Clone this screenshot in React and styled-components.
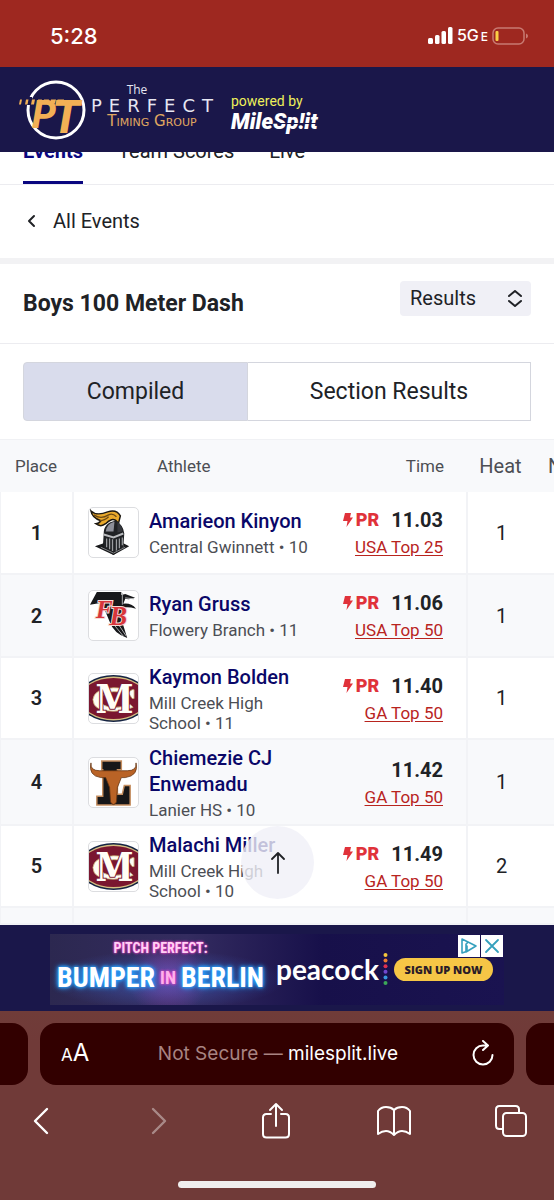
import React from "react";
import styled, { createGlobalStyle, css } from "styled-components";

const GlobalStyle = createGlobalStyle`
  * { box-sizing: border-box; }
  body { margin: 0; background: #fff; color: #202226; font-family: Roboto, "Liberation Sans", sans-serif; }
  button, select { font: inherit; color: inherit; margin: 0; }
`;

const Page = styled.div`
  min-height: 100vh;
  display: flex;
  flex-direction: column;
  overflow: hidden;
`;

const StatusBar = styled.div`
  height: 67px;
  padding: 4px 26px 0 50px;
  display: flex;
  align-items: center;
  justify-content: space-between;
  background: #9e2820;
  color: #fff;
  font-family: Inter, "Liberation Sans", sans-serif;
`;
const Clock = styled.time`
  font-size: 22px;
  line-height: 28px;
  font-weight: 500;
`;
const StatusIcons = styled.div`
  display: flex;
  align-items: center;
  gap: 4px;
  font-size: 16px;
  line-height: 20px;
  font-weight: 500;
`;
const Network = styled.span`
  small { font-size: 12px; margin-left: 2px; }
`;

const Header = styled.header`
  position: relative;
  z-index: 2;
  height: 85px;
  padding: 0 18px;
  display: flex;
  align-items: center;
  background: #1a174a;
  color: #fff;
`;
const BrandText = styled.div`
  width: 128px;
  margin: 0 0 8px 2px;
  display: flex;
  flex-direction: column;
  align-items: center;
  font-family: "DejaVu Sans", sans-serif;
  color: #e6e6f2;
`;
const BrandThe = styled.span`
  margin-right: 30px;
  font: 12px/14px "Open Sans", sans-serif;
`;
const BrandName = styled.span`
  font-size: 18px;
  line-height: 17px;
  letter-spacing: 7px;
  margin-right: -7px;
`;
const BrandSub = styled.span`
  font-size: 15px;
  line-height: 14px;
  font-variant: small-caps;
  white-space: nowrap;
  color: #e0a860;
`;
const Powered = styled.div`
  margin-left: 15px;
  padding-top: 7px;
`;
const PoweredBy = styled.div`
  font-size: 14px;
  line-height: 17px;
  color: #eef05a;
`;
const MileSplit = styled.div`
  position: relative;
  font: italic 900 22px/24px Roboto, sans-serif;
  &::after {
    content: "";
    position: absolute;
    right: 0;
    top: 13px;
    width: 40px;
    height: 1px;
    background: #1a174a;
  }
`;

const Main = styled.main`
  position: relative;
  flex: 1;
  overflow: hidden;
  background: #fff;
`;
const Tabs = styled.nav`
  margin-top: -13px;
  padding: 0 23px;
  display: flex;
  gap: 35px;
  border-bottom: 1px solid #ececf0;
`;
const Tab = styled.a`
  padding-bottom: 18px;
  font-size: 20px;
  line-height: 24px;
  text-decoration: none;
  color: #202226;
  border-bottom: 3px solid transparent;
  ${(p) => p.$active && css`
    font-weight: 700;
    color: #0a0780;
    border-color: #0a0780;
  `}
`;
const BackLink = styled.a`
  height: 79px;
  padding: 0 26px 2px;
  display: flex;
  align-items: center;
  gap: 16px;
  border-bottom: 6px solid #f2f2f4;
  font-size: 20px;
  line-height: 24px;
  color: inherit;
  text-decoration: none;
`;
const TitleBar = styled.div`
  height: 80px;
  padding: 0 23px;
  display: flex;
  align-items: center;
  justify-content: space-between;
  border-bottom: 1px solid #ececf0;
`;
const Title = styled.h1`
  margin: 0;
  font-size: 23px;
  line-height: 28px;
  font-weight: 700;
`;
const SelectBox = styled.label`
  position: relative;
  margin-bottom: 10px;
  svg { position: absolute; right: 9px; top: 9px; pointer-events: none; }
`;
const Select = styled.select`
  appearance: none;
  display: block;
  width: 131px;
  height: 35px;
  padding: 0 10px 2px;
  border: 0;
  border-radius: 4px;
  background: #f0f0f6;
  font-size: 20px;
  line-height: 24px;
`;
const Segments = styled.div`
  margin: 18px 23px;
  display: grid;
  grid-template-columns: 225fr 283fr;
`;
const Segment = styled.button`
  height: 59px;
  border: 1px solid #d4d6de;
  border-left-width: ${(p) => (p.$active ? "1px" : "0")};
  border-radius: ${(p) => (p.$active ? "4px 0 0 4px" : "0")};
  background: ${(p) => (p.$active ? "#d9dcec" : "#fff")};
  font-size: 23px;
  line-height: 28px;
`;

const Table = styled.table`
  width: calc(100% + 45px);
  table-layout: fixed;
  border-collapse: separate;
  border-spacing: 0;
`;
const HeadCell = styled.th`
  height: 53px;
  padding: 0 ${(p) => p.$right || 0}px 0 ${(p) => p.$left || 0}px;
  background: #f8f9fb;
  border-top: 1px solid #f0f1f4;
  font-weight: 400;
  font-size: ${(p) => (p.$large ? 20 : 17)}px;
  line-height: 24px;
  text-align: ${(p) => p.$align || "center"};
  color: #4c4e54;
`;
const Row = styled.tr`
  height: ${(p) => p.$height}px;
  background: ${(p) => (p.$shaded ? "#f8f9fb" : "#fff")};
`;
const Cell = styled.td`
  padding: 0;
  border-left: ${(p) => (p.$bold ? 1 : 2)}px solid #f2f3f6;
  border-bottom: 2px solid #f2f3f6;
  font-size: 20px;
  text-align: center;
  font-weight: ${(p) => (p.$bold ? 600 : 400)};
`;
const OpenCell = styled(Cell)`
  border-left: 0;
`;
const Athlete = styled.div`
  padding: 4px 0 4px 14px;
  display: flex;
  align-items: center;
  gap: 10px;
  text-align: left;
`;
const Crest = styled.div`
  flex: none;
  width: 51px;
  height: 51px;
  border: 1px solid #dcdde0;
  border-radius: 5px;
  overflow: hidden;
  background: #fff;
  svg { display: block; width: 100%; height: 100%; }
`;
const AthleteText = styled.div`
  width: 162px;
`;
const Name = styled.a`
  display: block;
  font-size: 20px;
  line-height: 26px;
  font-weight: 500;
  color: #0a0768;
  text-decoration: none;
`;
const School = styled.div`
  margin-top: 3px;
  font-size: 17px;
  line-height: 20px;
  color: #4c4e54;
`;
const Result = styled.div`
  padding: 2px 23px 0 0;
  text-align: right;
  line-height: 26px;
`;
const Mark = styled.div`
  display: flex;
  align-items: center;
  justify-content: flex-end;
  gap: 12px;
  font-weight: 700;
`;
const Badge = styled.span`
  display: flex;
  align-items: center;
  gap: 3px;
  font-size: 18px;
  font-weight: 900;
  color: #e0323a;
`;
const RankLink = styled.a`
  font-size: 17px;
  color: #b8241e;
  text-decoration: underline;
  text-underline-offset: 2px;
`;
const ToTop = styled.button`
  position: absolute;
  left: 50%;
  bottom: 26px;
  width: 73px;
  height: 73px;
  margin-left: -36px;
  padding: 0;
  border: 0;
  border-radius: 50%;
  background: rgba(240, 240, 248, 0.8);
  display: grid;
  place-items: center;
`;

const AdStrip = styled.aside`
  height: 86px;
  padding-top: 2px;
  display: flex;
  align-items: center;
  justify-content: center;
  background: #1a174a;
`;
const Ad = styled.div`
  position: relative;
  width: 454px;
  height: 71px;
  padding: 0 11px 0 7px;
  display: flex;
  align-items: center;
  background:
    radial-gradient(ellipse 120px 30px at 115px 46px, rgba(70, 110, 220, 0.55), transparent),
    radial-gradient(circle at 118px 44px, rgba(190, 60, 180, 0.5), transparent 40px),
    linear-gradient(90deg, #2c2850, #342c60 30%, #17104a 60%, #1a1350);
  color: #fff;
`;
const Show = styled.div`
  flex: none;
  width: 207px;
  display: flex;
  flex-direction: column;
  align-items: center;
  font-family: "Liberation Sans Narrow", "Roboto Condensed", Roboto, sans-serif;
  font-weight: 700;
  white-space: nowrap;
`;
const ShowTop = styled.div`
  font-size: 14px;
  line-height: 18px;
  color: #ffd0f4;
  text-shadow: 0 0 3px #f040c8, 0 0 2px #f040c8;
`;
const ShowTitle = styled.div`
  display: flex;
  align-items: center;
  gap: 5px;
  font-size: 28px;
  line-height: 42px;
  text-shadow: 0 0 4px #28a0ff, 0 0 3px #28a0ff, 0 0 6px #28a0ff;
  small {
    font-size: 18px;
    color: #ffb0ec;
    text-shadow: 0 0 3px #f040c8, 0 0 3px #f040c8;
  }
`;
const Peacock = styled.div`
  flex: 1;
  padding-left: 12px;
  display: flex;
  align-items: center;
  gap: 4px;
  font: 700 28px/36px Lato, sans-serif;
`;
const SignUp = styled.button`
  flex: none;
  width: 99px;
  height: 23px;
  padding: 0;
  border: 0;
  border-radius: 12px;
  background: #f6c646;
  font: 800 11px/23px "Open Sans", sans-serif;
  color: #2a1c28;
`;
const AdChoices = styled.div`
  position: absolute;
  top: 1px;
  right: 1px;
  display: flex;
  gap: 1px;
`;
const AdButton = styled.button`
  width: 22px;
  height: 22px;
  padding: 0;
  border: 0;
  background: #fff;
  display: grid;
  place-items: center;
`;

const Safari = styled.footer`
  height: 189px;
  padding-top: 12px;
  display: flex;
  flex-direction: column;
  background: linear-gradient(#703c39, #703a38 30px);
  color: #fff;
  font-family: Inter, "Liberation Sans", sans-serif;
`;
const TabStrip = styled.div`
  display: grid;
  grid-template-columns: 28px 1fr 28px;
  gap: 12px;
`;
const SideTab = styled.div`
  background: #320000;
  border-radius: ${(p) => (p.$right ? "16px 0 0 16px" : "0 16px 16px 0")};
`;
const AddressBar = styled.div`
  height: 62px;
  padding: 0 19px 0 21px;
  display: grid;
  grid-template-columns: 32px 1fr 32px;
  align-items: center;
  border-radius: 16px;
  background: #320000;
`;
const BarButton = styled.button`
  padding: 0;
  border: 0;
  background: none;
  display: flex;
  align-items: baseline;
  justify-content: ${(p) => (p.$end ? "flex-end" : "flex-start")};
  font-size: ${(p) => p.$size || 16}px;
  line-height: 28px;
  small { font-size: 17px; }
`;
const Address = styled.div`
  font-size: 19px;
  line-height: 24px;
  text-align: center;
  white-space: nowrap;
  span { color: #a88482; }
`;
const Toolbar = styled.nav`
  padding: 15px 20px 0 18px;
  display: flex;
  align-items: center;
  justify-content: space-between;
`;
const ToolButton = styled(BarButton)`
  width: 46px;
  height: 42px;
  align-items: center;
  justify-content: center;
  opacity: ${(p) => (p.$dim ? 0.4 : 1)};
`;
const HomeBar = styled.div`
  width: 198px;
  height: 7px;
  margin: auto auto 12px;
  border-radius: 4px;
  background: #f0eeee;
`;

const Line = ({ w, h, d, sw = 2, box, children, color = "currentColor" }) => (
  <svg width={w} height={h} viewBox={box || `0 0 ${w} ${h}`} fill="none" stroke={color} strokeWidth={sw} strokeLinecap="round" strokeLinejoin="round" aria-hidden="true">
    {d && <path d={d} />}
    {children}
  </svg>
);

const Signal = () => (
  <svg width="25" height="17" viewBox="0 0 25 17" fill="#fff" aria-hidden="true">
    <rect x="0" y="11" width="5" height="6" rx="1.5" />
    <rect x="7" y="8" width="4.5" height="9" rx="1.5" />
    <rect x="13.5" y="4" width="4.5" height="13" rx="1.5" />
    <rect x="20" y="0" width="4.5" height="17" rx="1.5" />
  </svg>
);

const Battery = () => (
  <svg width="36" height="18" viewBox="0 0 36 18" aria-hidden="true">
    <rect x="1" y="1" width="31" height="16" rx="5" fill="none" stroke="#c87a72" strokeWidth="1.5" />
    <path d="M34 6.5q2 .7 2 2.5t-2 2.5z" fill="#c87a72" />
    <rect x="3.5" y="4" width="3" height="10" rx="1" fill="#fbcf45" />
  </svg>
);

const PTLogo = () => (
  <svg width="68" height="62" viewBox="0 0 68 62" role="img" aria-label="PT">
    <circle cx="38" cy="31" r="28" fill="none" stroke="#fff" strokeWidth="3" />
    <path d="M0 18h14v8H0z" fill="#1a174a" />
    <g fill="#f2b055" fontFamily="Roboto, sans-serif" fontWeight="800" fontStyle="italic">
      <text x="14" y="49" fontSize="38">P</text>
      <text x="34" y="54" fontSize="46">T</text>
      <path d="M2 20.500h2l-1 5H1zM8 20.500h2.500l-1 5H7zM14 20.500h3l-1 5h-3zM20 20.500h4l-1 5h-4zM26 20.500h5l-1 4h-5zM33 20.500h5l-1 4h-5zM39.500 20.500H46v4h-7z" />
    </g>
  </svg>
);

const Knight = () => (
  <svg viewBox="0 0 50 50" role="img" aria-label="Central Gwinnett">
    <path d="M2 3q3 3 8 3 4 0 9-2 9-3 13 4l-2 8q-3-5-7-4-3 1-6 4-5 4-10 0 3 0 5-3Q3 10 2 3z" fill="#e9a92c" stroke="#1c1812" strokeWidth="1.500" />
    <path d="M5 7q7 5 15 0 4-2 8 2M11 13q5 0 9-4" fill="none" stroke="#6d4914" strokeWidth="1.300" />
    <path d="M15 26q0-11 12-13 8 4 9 13l-1 14-10 8-11-7z" fill="#202225" />
    <path d="M17 24q1-8 9-10l-1 10z" fill="#8d8f99" />
    <path d="M29 14q5 4 5 10l-5 1z" fill="#34363b" />
    <path d="M15 27l10 3 10-4" fill="none" stroke="#b8babd" strokeWidth="2" />
    <path d="M18 31v9M21 31v11M24 32v12M28 32v12M31 31v10M34 30v8" stroke="#9b9da0" strokeWidth="1.300" />
    <path d="M6 39l9-3v4l10 5 10-5v-4l6 3-16 9z" fill="#18191b" />
    <path d="M12 40l13 6 12-6" fill="none" stroke="#85878a" />
  </svg>
);

const Falcon = () => (
  <svg viewBox="0 0 50 50" role="img" aria-label="Flowery Branch">
    <path d="M8 1h25v3l4-1 10 4q-5 2-10 1l-2 5q8-1 13 5-8-2-13-1l-1 15 5 16q-14-5-18-17L13 12 1 14z" fill="#17181a" />
    <path d="M34 2v12M37 7l9 1M26 35l9 11M30 34l8 12" stroke="#b0b2b4" strokeWidth="1" fill="none" />
    <g fontFamily="Liberation Serif, serif" fontStyle="italic" fontWeight="700" fill="#d8363b" stroke="#f3dcd8" strokeWidth="2" paintOrder="stroke">
      <text x="7" y="28" fontSize="26">F</text>
      <text x="21" y="35" fontSize="27">B</text>
    </g>
  </svg>
);

const MillCreek = () => (
  <svg viewBox="0 0 50 50" role="img" aria-label="Mill Creek">
    <ellipse cx="25" cy="25" rx="35" ry="24" fill="#152443" />
    <ellipse cx="25" cy="25" rx="34" ry="22.500" fill="#d5bf82" />
    <ellipse cx="25" cy="25" rx="33" ry="21" fill="#7a1730" />
    <path d="M46 16v9h-2q-2-5-8-6-6-1-11-1-12 1-13 8 1 8 13 8 10 0 17-3l3 3q-8 4-20 4Q4 38 4 26q1-11 21-12 11 0 16 4l3-2z" fill="#fffdf5" stroke="#c8ad70" strokeWidth="0.800" />
    <text x="26" y="40" fontSize="39" fontFamily="DejaVu Serif Condensed, Liberation Serif, serif" fontWeight="700" fill="#fffdf5" stroke="#7a1730" strokeWidth="2" paintOrder="stroke" textAnchor="middle">M</text>
  </svg>
);

const Longhorn = () => (
  <svg viewBox="0 0 50 50" role="img" aria-label="Lanier">
    <path d="M13 3h20v9h-4v25h5l2-9h6v20H8v-9h6V12h-1z" fill="#171719" stroke="#c68f60" strokeWidth="1.500" />
    <path d="M2 5q-1 8 9 8 14 0 15 0 8 0 13 0 10 0 9-8 3 13-11 15h-4l-4 10-1 15q-3 5-6 0l-1-15-4-10h-5Q-1 18 2 5z" fill="#b96326" stroke="#653412" strokeWidth="0.800" />
  </svg>
);

const crests = { knight: Knight, falcon: Falcon, creek: MillCreek, longhorn: Longhorn };

const athletes = [
  { place: 1, crest: "knight", name: "Amarieon Kinyon", school: "Central Gwinnett • 10", pr: true, time: "11.03", rank: "USA Top 25", heat: 1, height: 83 },
  { place: 2, crest: "falcon", name: "Ryan Gruss", school: "Flowery Branch • 11", pr: true, time: "11.06", rank: "USA Top 50", heat: 1, height: 83 },
  { place: 3, crest: "creek", name: "Kaymon Bolden", school: "Mill Creek High School • 11", pr: true, time: "11.40", rank: "GA Top 50", heat: 1, height: 82 },
  { place: 4, crest: "longhorn", name: "Chiemezie CJ Enwemadu", school: "Lanier HS • 10", time: "11.42", rank: "GA Top 50", heat: 1, height: 86 },
  { place: 5, crest: "creek", name: "Malachi Miller", school: "Mill Creek High School • 10", pr: true, time: "11.49", rank: "GA Top 50", heat: 2, height: 82 },
];

function AthleteRow({ a, shaded }) {
  const Logo = crests[a.crest];
  return (
    <Row $height={a.height} $shaded={shaded}>
      <Cell $bold>{a.place}</Cell>
      <Cell>
        <Athlete>
          <Crest><Logo /></Crest>
          <AthleteText>
            <Name href="#athlete">{a.name}</Name>
            <School>{a.school}</School>
          </AthleteText>
        </Athlete>
      </Cell>
      <OpenCell>
        <Result>
          <Mark>
            {a.pr && (
              <Badge>
                <svg width="10" height="14" viewBox="0 0 10 14" fill="currentColor" aria-hidden="true">
                  <path d="M2 0h6L7 4.500h3L3.500 14l1-6H0z" />
                </svg>
                PR
              </Badge>
            )}
            <span>{a.time}</span>
          </Mark>
          <RankLink href="#rankings">{a.rank}</RankLink>
        </Result>
      </OpenCell>
      <Cell>{a.heat}</Cell>
      <OpenCell />
    </Row>
  );
}

export default function App() {
  return (
    <Page>
      <GlobalStyle />
      <StatusBar>
        <Clock>5:28</Clock>
        <StatusIcons>
          <Signal />
          <Network>5G<small>E</small></Network>
          <Battery />
        </StatusIcons>
      </StatusBar>
      <Header>
        <PTLogo />
        <BrandText>
          <BrandThe>The</BrandThe>
          <BrandName>PERFECT</BrandName>
          <BrandSub>Timing Group</BrandSub>
        </BrandText>
        <Powered>
          <PoweredBy>powered by</PoweredBy>
          <MileSplit>MileSp!it</MileSplit>
        </Powered>
      </Header>
      <Main>
        <Tabs>
          <Tab href="#events" $active>Events</Tab>
          <Tab href="#scores">Team Scores</Tab>
          <Tab href="#live">Live</Tab>
        </Tabs>
        <BackLink href="#all">
          <Line w={11} h={14} d="M8 2L3 7l5 5" />
          All Events
        </BackLink>
        <TitleBar>
          <Title>Boys 100 Meter Dash</Title>
          <SelectBox>
            <Select aria-label="View" defaultValue="Results">
              <option>Results</option>
            </Select>
            <Line w={14} h={17} d="M1 6l6-5 6 5M1 11l6 5 6-5" />
          </SelectBox>
        </TitleBar>
        <Segments>
          <Segment $active>Compiled</Segment>
          <Segment>Section Results</Segment>
        </Segments>
        <Table>
          <colgroup>
            <col style={{ width: 72 }} />
            <col />
            <col style={{ width: 140 }} />
            <col style={{ width: 69 }} />
            <col style={{ width: 64 }} />
          </colgroup>
          <thead>
            <tr>
              <HeadCell>Place</HeadCell>
              <HeadCell $align="left" $left={85}>Athlete</HeadCell>
              <HeadCell $align="right" $right={22}>Time</HeadCell>
              <HeadCell $large>Heat</HeadCell>
              <HeadCell $large $align="left" $left={13}>N</HeadCell>
            </tr>
          </thead>
          <tbody>
            {athletes.map((a, i) => <AthleteRow key={a.place} a={a} shaded={i % 2 === 1} />)}
            <Row $height={17} $shaded>
              <Cell $bold /><Cell /><OpenCell /><Cell /><OpenCell />
            </Row>
          </tbody>
        </Table>
        <ToTop aria-label="Back to top">
          <Line w={14} h={22} d="M7 21V1M1 7l6-6 6 6" sw={1.8} />
        </ToTop>
      </Main>
      <AdStrip>
        <Ad>
          <Show>
            <ShowTop>PITCH PERFECT:</ShowTop>
            <ShowTitle>BUMPER <small>IN</small> BERLIN</ShowTitle>
          </Show>
          <Peacock>
            peacock
            <svg width="5" height="34" viewBox="0 0 5 34" aria-hidden="true">
              {["#f4c63c", "#ec7a30", "#dc3050", "#7048d0", "#3898e0", "#3ca858"].map((c, i) => (
                <circle key={c} cx="2.500" cy={3 + i * 5.6} r="2" fill={c} />
              ))}
            </svg>
          </Peacock>
          <SignUp>SIGN UP NOW</SignUp>
          <AdChoices>
            <AdButton aria-label="Ad information">
              <Line w={18} h={18} d="M2 2v14l3-1M2 2l14 7-10 6V7M7 9v5M7 6v.5" color="#35a0bd" sw={1.6} />
            </AdButton>
            <AdButton aria-label="Close ad">
              <Line w={18} h={18} d="M3 3l12 12M15 3L3 15" color="#35a0bd" sw={1.8} />
            </AdButton>
          </AdChoices>
        </Ad>
      </AdStrip>
      <Safari>
        <TabStrip>
          <SideTab />
          <AddressBar>
            <BarButton aria-label="Page settings" $size={24}><small>A</small>A</BarButton>
            <Address><span>Not Secure — </span>milesplit.live</Address>
            <BarButton aria-label="Reload" $end>
              <Line w={24} h={28} d="M12 5.500A9.500 9.500 0 1 0 21.500 15M12 5.500h4M12 1l5 4.500-5 4.500" />
            </BarButton>
          </AddressBar>
          <SideTab $right />
        </TabStrip>
        <Toolbar>
          <ToolButton aria-label="Back"><Line w={18} h={30} d="M15 3L3 15l12 12" sw={2.4} /></ToolButton>
          <ToolButton $dim aria-label="Forward"><Line w={18} h={30} d="M3 3l12 12L3 27" sw={2.4} /></ToolButton>
          <ToolButton aria-label="Share">
            <Line w={30} h={38} d="M10 12H5.500Q2 12 2 15.500V32q0 3.500 3.500 3.500h19Q28 35.500 28 32V15.500Q28 12 24.500 12H20M15 24V2M9 8l6-6 6 6" />
          </ToolButton>
          <ToolButton aria-label="Bookmarks">
            <Line w={36} h={32} d="M18 30V5Q15 2 10 2T2 6v23q4-3 8-3t8 4q4-4 8-4t8 3V6q-3-4-8-4t-8 3" />
          </ToolButton>
          <ToolButton aria-label="Tabs">
            <Line w={34} h={34}>
              <rect x="9" y="9" width="23" height="23" rx="3.500" />
              <path d="M9 25H5.500Q2 25 2 21.500V5.500Q2 2 5.500 2h16Q25 2 25 5.500V9" />
            </Line>
          </ToolButton>
        </Toolbar>
        <HomeBar />
      </Safari>
    </Page>
  );
}
